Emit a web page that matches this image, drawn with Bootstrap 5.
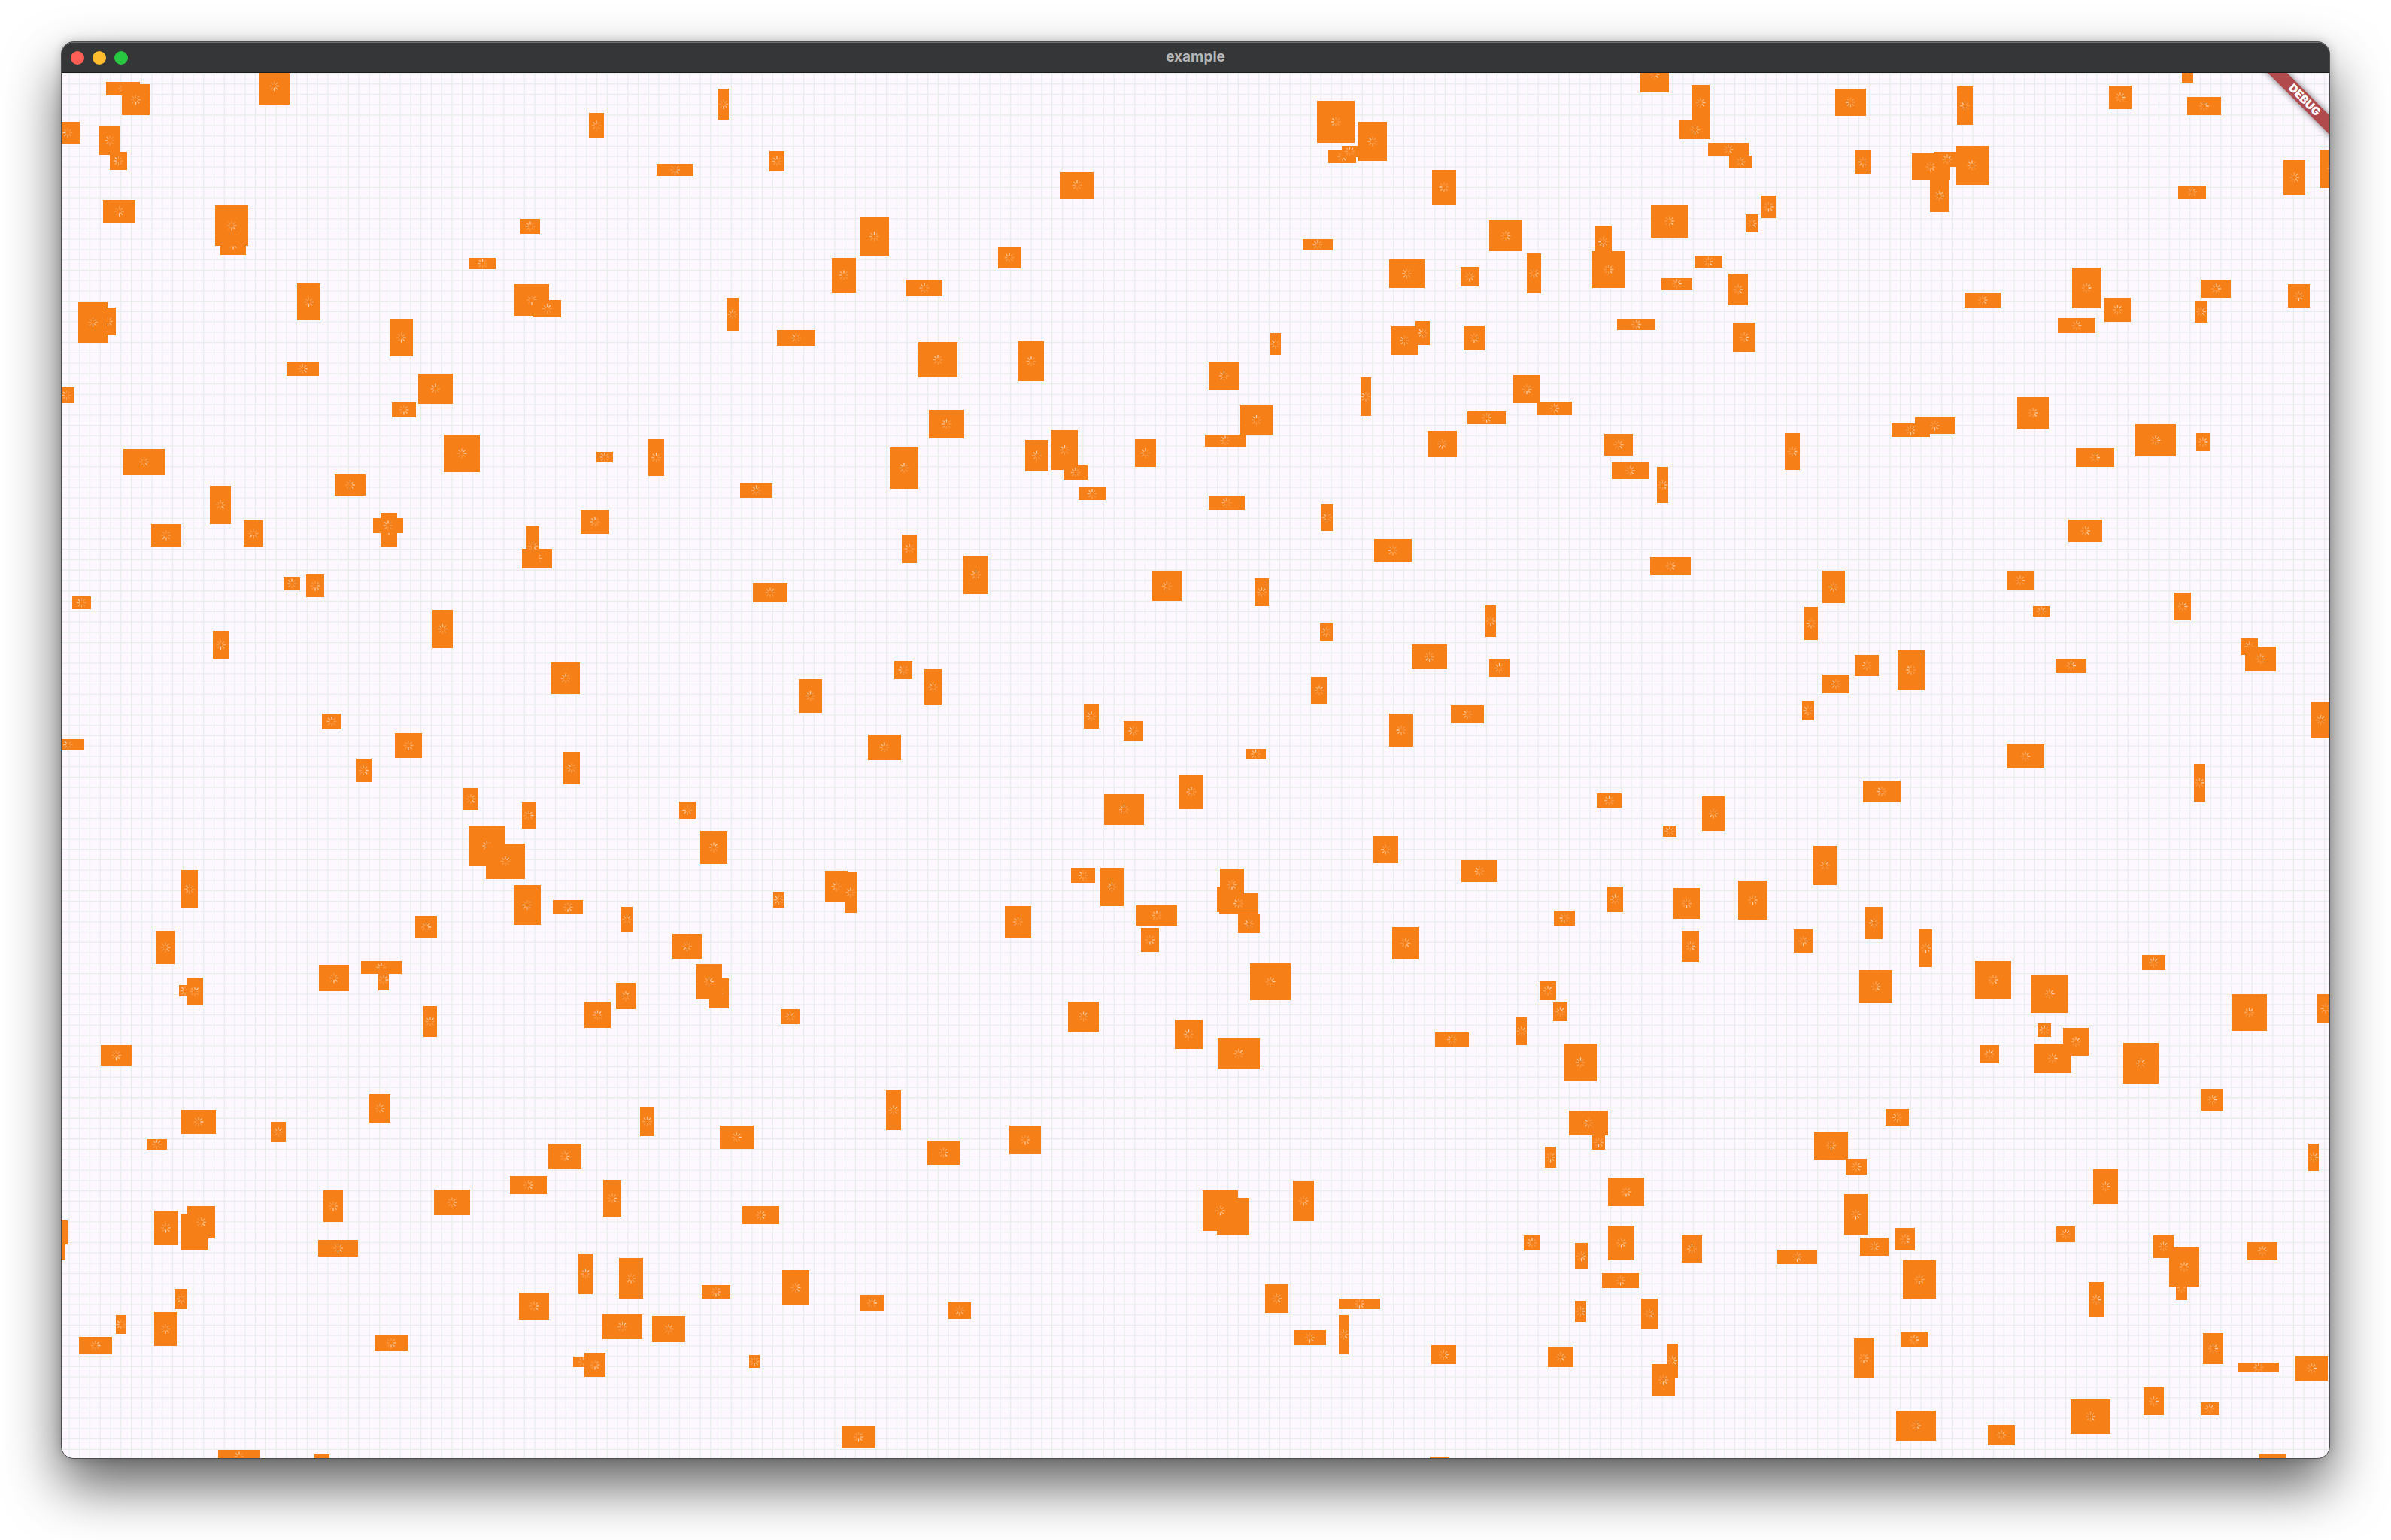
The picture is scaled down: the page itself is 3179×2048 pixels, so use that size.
<!DOCTYPE html>
<html lang="en">
<head>
<meta charset="utf-8">
<meta name="viewport" content="width=device-width, initial-scale=1">
<title>example</title>
<link rel="stylesheet" href="https://cdn.jsdelivr.net/npm/bootstrap@5.3.0/dist/css/bootstrap.min.css">
<style>
  body { background: #fff; padding: 55px 81px 108px; font-family: Inter, "Liberation Sans", sans-serif; }
  .app-window {
    border-radius: 17px;
    border: 1px solid #4b4c4d;
    background: #fdf7ff;
    box-shadow: 0 36px 72px rgba(0, 0, 0, .62), 0 0 14px rgba(0, 0, 0, .2);
  }
  .title-bar { height: 41px; padding: 0 12px; background: #353638; border-top: 1px solid #6f7071; border-bottom: 1px solid #1b1b1c; }
  .lights { gap: 11px; }
  .light { width: 18px; height: 18px; border: 0; border-radius: 50%; padding: 0; }
  .light-close { background: #ff5f57; }
  .light-min { background: #febc2e; }
  .light-zoom { background: #28c840; }
  .app-title { font-size: 19px; line-height: 24px; font-weight: 700; color: #b5b6b7; padding-bottom: 2px; }
  .grid-line { stroke: rgba(30, 160, 60, .09); stroke-width: 1.3; fill: none; }
  .cell { fill: #f67f17; }
  .tick { stroke: #fff; stroke-width: 1.3; stroke-linecap: round; }
  .debug-ribbon {
    top: 27px; right: -47px; width: 160px; height: 18px;
    transform: rotate(45deg);
    background: #b14a4d; color: #fff;
    font-size: 15px; line-height: 18px; font-weight: 900;
    box-shadow: 0 0 9px rgba(0, 0, 0, .55);
  }
</style>
<script src="https://cdn.jsdelivr.net/npm/bootstrap@5.3.0/dist/js/bootstrap.bundle.min.js"></script>
</head>
<body class="d-flex flex-column min-vh-100">
<main class="app-window flex-fill d-flex flex-column overflow-hidden">
  <header class="title-bar position-relative d-flex align-items-center justify-content-center">
    <div class="lights d-flex position-absolute start-0 ms-2 ps-1">
      <button type="button" class="light light-close" aria-label="Close"></button>
      <button type="button" class="light light-min" aria-label="Minimize"></button>
      <button type="button" class="light light-zoom" aria-label="Zoom"></button>
    </div>
    <h1 class="app-title m-0">example</h1>
  </header>
  <section class="flex-fill position-relative overflow-hidden" id="board">
    <svg class="position-absolute top-0 start-0 w-100 h-100" id="scene" aria-hidden="true">
      <defs id="spinners"></defs>
      <path class="grid-line" id="grid"></path>
      <g id="cells"></g>
    </svg>
    <div class="debug-ribbon position-absolute text-center">DEBUG</div>
  </section>
</main>
<script>
// Each zone has its own origin and unit size; a cell is left, top, right, bottom, spinner phase.
const U = 760 / 1568, V1 = 620 / 1568, V2 = 1250 / 1568;
const zones = [
 {x:-2, y:-7, u:U, v:V1, cells:[
 [126,49,218,93,3],[169,56,246,159,4],[545,-1,629,125,4],[-13,181,53,255,6],[107,196,165,294,7],[137,283,184,345,7],[1450,152,1491,238,0],
 [118,444,207,521,4],[439,560,509,630,4],[424,463,515,599,4],[1263,508,1317,558,0],[1123,640,1195,679,0],[650,726,713,850,4],
 [1246,728,1341,834,4],[1298,781,1375,839,1],[110,807,152,901,4],[50,787,129,926,4],[904,845,968,970,4],[621,988,710,1037,3],
 [-4,1074,40,1127,7],[982,1030,1076,1131,0],[909,1125,976,1175,4],[173,1282,286,1370,4],[1052,1234,1152,1360,2],[1470,1292,1517,1328,0],
 [753,1367,838,1439,3],[411,1406,469,1535,3]]},
 {x:-2, y:593, u:U, v:V2, cells:[
 [250,9,333,46,5],[503,2,558,46,5],[879,-10,925,47,4],[858,-1,940,24,0],[1267,50,1350,83,2],[1280,13,1314,79,3],[1427,-15,1507,25,0],
 [613,97,659,119,0],[675,93,725,130,4],[32,129,84,150,7],[1021,152,1077,216,1],[419,187,463,233,4],[1347,240,1425,292,0],
 [718,325,771,351,0],[-22,368,67,386,7],[919,358,992,399,4],[811,400,854,439,3],[1380,389,1425,443,7],[1105,449,1148,486,3],
 [1266,473,1304,517,2],[1121,512,1222,580,0],[1168,542,1274,601,1],[333,586,378,650,7],[1244,611,1319,677,6],[1351,636,1434,660,4],
 [974,662,1033,700,2],[261,688,315,742,3],[710,744,793,788,4],[826,738,936,759,0],[873,751,902,787,2],[326,778,358,796,7],[347,765,393,812,1],
 [1525,774,1579,818,1],[1438,807,1511,849,1],[997,813,1033,864,1],[112,878,197,912,4],[847,960,906,1007,3],[333,986,427,1026,2],
 [578,1006,619,1040,1],[238,1035,293,1053,1],[1339,1042,1430,1084,3],[1234,1096,1334,1126,3],[1026,1119,1125,1162,3],[722,1120,776,1173,4],
 [1489,1103,1539,1164,3],[257,1154,322,1212,4],[330,1159,406,1219,4],[348,1147,424,1200,3],[-40,1170,21,1211,4],[-46,1190,14,1236,4],
 [707,1203,816,1231,4],[1421,1226,1460,1293,1],[1533,1233,1599,1301,5],[315,1285,348,1318,6],[257,1323,319,1380,4],[1259,1291,1341,1336,3],
 [152,1328,182,1360,7],[51,1365,143,1394,2],[862,1362,954,1387,4],[1487,1327,1596,1368,1],[1407,1398,1462,1415,2],[1439,1391,1496,1431,4],
 [434,1553,548,1575,0],[697,1560,739,1600,0],[1540,647,1570,690,1]]},
 {x:758, y:-7, u:U, v:V1, cells:[
 [238,72,267,175,4],[378,280,419,348,0],[68,324,170,363,4],[1177,352,1266,439,0],[626,500,705,634,0],[1004,602,1067,674,0],
 [549,641,614,755,0],[753,712,852,769,0],[259,774,293,884,0],[399,883,504,936,0],[786,922,893,1042,0],[1060,920,1131,1055,0],
 [814,1150,911,1248,0],[1151,1218,1223,1354,0],[1184,1337,1250,1385,0],[1079,1252,1142,1357,0],[1380,1249,1437,1344,0],
 [45,1250,89,1372,0],[708,1278,787,1415,0],[298,1396,386,1446,0],[1226,1411,1299,1453,0]]},
 {x:758, y:593, u:U, v:V2, cells:[
 [740,26,782,74,0],[910,61,977,125,0],[333,106,428,139,1],[1428,88,1509,137,0],[721,237,769,267,7],[802,251,849,310,0],[457,267,521,324,0],
 [648,360,738,403,0],[1240,308,1282,350,0],[1350,337,1403,370,7],[1503,427,1569,484,0],[1296,459,1404,511,0],[130,472,176,501,6],
 [187,521,263,576,1],[530,587,592,640,7],[583,589,617,657,0],[387,622,418,649,7],[1205,582,1271,607,7],[1285,582,1349,646,0],
 [1023,646,1095,699,0],[1384,645,1496,679,0],[112,692,191,734,5],[211,766,266,816,1],[176,743,247,801,2],[1396,682,1447,723,4],
 [1196,805,1282,855,1],[1490,836,1566,884,0],[409,818,460,843,1],[698,953,738,1020,1],[22,981,61,1030,1],[241,1012,335,1051,2],
 [810,1037,899,1078,3],[1035,1012,1123,1060,4],[304,1146,405,1177,3],[192,1278,271,1301,4],[413,1253,486,1312,3],[627,1294,692,1322,2],
 [869,1307,931,1335,5],[55,1330,147,1374,2],[321,1395,350,1416,4],[575,1513,668,1550,4]]},
 {x:1518, y:-7, u:U, v:V1, cells:[
 [1199,-37,1278,83,3],[1338,57,1388,176,3],[1307,176,1390,239,4],[1385,253,1495,298,3],[1443,297,1504,339,3],[312,112,415,252,7],
 [426,181,503,314,7],[343,277,419,320,3],[380,263,423,301,1],[628,345,694,460,6],[1228,461,1329,571,3],[1531,431,1570,507,4],
 [1488,494,1522,553,3],[783,514,875,618,3],[1072,532,1121,640,6],[1066,617,1156,740,3],[273,577,355,614,0],[510,646,606,742,7],
 [705,670,755,735,4],[887,624,927,759,4],[1348,632,1423,672,3],[1257,707,1341,745,2],[1441,692,1494,799,3],[516,870,588,965,7],
 [581,852,620,932,7],[714,867,771,952,4],[1135,844,1240,882,3],[1453,858,1515,955,3],[183,893,213,965,7],[15,989,99,1086,0],
 [431,1043,461,1171,7],[851,1034,925,1129,4],[914,1124,1010,1169,3],[101,1136,189,1234,0],[4,1233,115,1274,0],[724,1156,830,1199,4],
 [614,1222,696,1309,5],[1100,1232,1179,1304,3],[1121,1328,1222,1383,3],[1244,1344,1274,1465,3],[14,1439,114,1488,0],[324,1468,355,1559,7]]},
 {x:1518, y:593, u:U, v:V2, cells:[
 [468,34,572,71,6],[1225,64,1337,94,3],[140,99,179,146,1],[319,174,354,203,7],[773,144,802,197,4],[571,210,668,251,5],[784,235,840,263,0],
 [295,264,341,309,1],[678,311,769,341,7],[509,325,576,380,6],[115,384,172,401,0],[1080,458,1147,482,0],[1368,463,1430,520,5],
 [1261,512,1298,531,0],[467,529,534,575,6],[708,570,807,606,7],[37,615,90,656,7],[45,583,112,637,4],[43,625,148,659,7],
 [94,660,155,691,7],[1108,613,1152,656,0],[961,653,1019,679,6],[1289,616,1361,667,4],[1466,603,1547,669,4],[518,681,591,735,3],
 [1312,687,1359,739,3],[127,741,239,803,2],[922,771,967,803,1],[959,807,999,838,1],[858,832,888,878,1],[635,857,729,880,0],
 [40,867,154,918,1],[991,876,1079,938,0],[1067,1028,1101,1052,4],[1002,987,1111,1029,7],[937,1048,968,1083,4],[1109,1099,1210,1146,4],
 [37,1133,125,1194,1],[-3,1120,94,1188,4],[245,1104,304,1171,4],[879,1196,924,1221,0],[1111,1179,1183,1237,4],[1020,1208,1055,1252,4],
 [1313,1195,1367,1240,0],[1093,1258,1195,1283,4],[169,1277,233,1325,3],[372,1301,485,1318,4],[1020,1305,1051,1340,3],
 [1200,1301,1247,1352,3],[371,1328,399,1394,3],[248,1353,337,1379,4],[945,1381,1015,1415,3],[626,1378,693,1410,3],
 [1271,1376,1301,1433,3],[1230,1410,1293,1463,4],[621,1564,674,1600,0]]},
 {x:2278, y:-7, u:U, v:V1, cells:[
 [1117,-40,1147,51,2],[165,72,249,161,6],[500,62,543,191,7],[917,61,978,139,2],[1130,99,1224,160,2],[221,277,262,356,6],
 [424,378,476,486,2],[375,289,479,379,4],[437,282,508,333,1],[495,262,585,394,0],[1106,397,1183,439,2],[1395,310,1455,427,3],
 [1495,276,1560,405,2],[815,673,894,809,2],[1170,714,1250,775,2],[1407,728,1467,806,4],[520,756,619,807,3],[903,774,975,855,1],
 [1151,784,1186,857,3],[775,841,879,894,2],[665,1108,750,1214,3],[320,1197,424,1242,4],[384,1176,493,1232,4],[27,1228,69,1353,3],
 [988,1200,1099,1307,2],[1155,1230,1193,1291,2],[825,1280,931,1344,2]]},
 {x:2278, y:593, u:U, v:V2, cells:[
 [805,1,897,39,3],[130,87,191,141,6],[635,88,710,118,2],[81,147,118,202,6],[707,145,753,163,1],[1095,123,1140,169,2],[219,227,284,262,7],
 [337,219,410,285,7],[770,233,854,257,2],[1279,199,1324,227,0],[1289,213,1375,255,2],[129,260,205,291,7],[74,303,107,336,7],
 [1469,306,1524,365,1],[635,376,738,416,2],[1149,409,1180,472,2],[242,437,344,473,7],[106,546,169,611,1],[248,647,294,701,7],
 [51,685,104,724,4],[396,685,431,748,4],[548,738,647,800,3],[1006,728,1070,753,1],[231,753,322,808,3],[701,760,804,824,2],
 [1252,793,1350,854,1],[1486,793,1534,840,6],[721,842,757,864,0],[710,876,813,925,2],[791,849,861,896,1],[561,878,614,908,1],
 [956,874,1052,942,1],[1170,951,1229,987,2],[304,985,368,1012,7],[107,1022,201,1069,4],[194,1067,251,1094,3],[1462,1043,1491,1087,2],
 [873,1085,941,1143,2],[190,1127,254,1194,4],[771,1181,824,1207,1],[330,1183,383,1220,3],[234,1199,312,1229,3],[1296,1207,1379,1235,1],
 [1038,1195,1093,1233,1],[1100,1262,1131,1303,1],[1082,1216,1164,1281,1],[7,1219,115,1243,4],[351,1237,441,1301,4],[861,1273,901,1332,2],
 [217,1367,271,1433,4],[345,1357,418,1382,2],[1173,1359,1229,1410,2],[1271,1407,1382,1424,0],[1428,1396,1517,1438,2],
 [1011,1449,1067,1495,2],[1168,1474,1218,1495,1],[811,1469,920,1527,3],[332,1488,442,1538,3],[584,1512,659,1546,2],[1328,1561,1402,1600,2]]}
];

// Eight spinner frames: the leading tick is brightest and its trail fades behind it.
const fade = [.62, .5, .4, .3, .2, .2, .2, .2];
document.getElementById('spinners').innerHTML = fade.map((_, phase) =>
  `<g id="spin${phase}">` + fade.map((alpha, i) =>
    `<line class="tick" y1="-3" y2="-6" opacity="${alpha}" transform="rotate(${(phase - i) * 45})"/>`).join('') + '</g>').join('');

document.getElementById('cells').innerHTML = zones.map(z => z.cells.map(([l, t, r, b, phase]) => {
  const x = Math.round(z.x + l * z.u), y = Math.round(z.y + t * z.v);
  const w = Math.round(z.x + r * z.u) - x, h = Math.round(z.y + b * z.v) - y;
  return `<rect class="cell" x="${x}" y="${y}" width="${w}" height="${h}"/><use href="#spin${phase}" x="${x + w / 2}" y="${y + h / 2}"/>`;
}).join('')).join('');

function drawGrid() {
  const board = document.getElementById('board'), w = board.clientWidth, h = board.clientHeight, pitch = 13.755;
  let d = '';
  for (let x = 10; x < w; x += pitch) d += `M${x} 0V${h}`;
  for (let y = 1; y < h; y += pitch) d += `M0 ${y}H${w}`;
  document.getElementById('grid').setAttribute('d', d);
}
drawGrid();
addEventListener('resize', drawGrid);
</script>
</body>
</html>
